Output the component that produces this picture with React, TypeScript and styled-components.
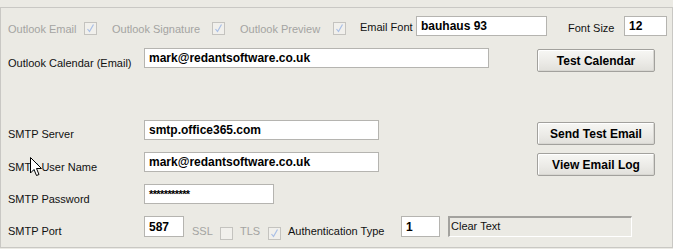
import { FC } from 'react';
import styled, { createGlobalStyle } from 'styled-components';

const GlobalStyle = createGlobalStyle`
  html, body {
    margin: 0;
    padding: 0;
    background: #ebeae4;
  }
  body {
    font-family: 'Liberation Sans', Arial, sans-serif;
    font-size: 11px;
    color: #000;
  }
`;

const Screen = styled.div`
  position: relative;
  width: 673px;
  height: 249px;
  padding-top: 7px;
  box-sizing: border-box;
`;

const Panel = styled.div`
  width: 673px;
  height: 241px;
  box-sizing: border-box;
  border: 1px solid #c9c8c4;
  padding: 8px 0 0 7px;
  display: flex;
  flex-direction: column;
`;

// each row has a fixed height so labels sitting lower don't push the next row down
const Row = styled.div<{ $top?: number; $h: number }>`
  display: flex;
  align-items: flex-start;
  height: ${(p) => p.$h}px;
  flex-shrink: 0;
  margin-top: ${(p) => p.$top ?? 0}px;
`;

const Label = styled.span<{ $w: number; $top?: number; $ml?: number; $disabled?: boolean }>`
  display: block;
  width: ${(p) => p.$w}px;
  margin-left: ${(p) => p.$ml ?? 0}px;
  margin-top: ${(p) => p.$top ?? 9}px;
  line-height: 13px;
  white-space: nowrap;
  color: ${(p) => (p.$disabled ? '#a4a4a2' : '#111')};
`;

const Input = styled.div<{ $w: number; $h?: number }>`
  width: ${(p) => p.$w}px;
  height: ${(p) => p.$h ?? 20}px;
  box-sizing: border-box;
  border: 1px solid #b5b4b0;
  background: #fff;
  padding: 0 4px;
  display: flex;
  align-items: center;
  font-weight: bold;
  font-size: 12px;
  white-space: nowrap;
  overflow: hidden;
  color: #000;
`;

const Password = styled.span`
  font-size: 11px;
  letter-spacing: -0.6px;
  margin-top: -1px;
`;

const ReadOnlyBox = styled.div<{ $w: number; $ml?: number }>`
  width: ${(p) => p.$w}px;
  height: 21px;
  margin-left: ${(p) => p.$ml ?? 0}px;
  box-sizing: border-box;
  border-top: 2px solid #a3a29e;
  border-left: 2px solid #a3a29e;
  border-bottom: 1px solid #fff;
  border-right: 1px solid #fff;
  padding: 2px 0 0 1px;
  line-height: 13px;
  color: #111;
`;

const Button = styled.div<{ $ml: number; $top?: number }>`
  width: 118px;
  height: 23px;
  margin-left: ${(p) => p.$ml}px;
  margin-top: ${(p) => p.$top ?? 0}px;
  box-sizing: border-box;
  border: 1px solid #a2a19d;
  border-radius: 2px;
  box-shadow: inset 1px 1px 0 #fff, inset -1px -1px 0 #d8d7d2;
  background: linear-gradient(#f7f7f4, #ebeae6 60%, #e1e0db);
  display: flex;
  align-items: center;
  justify-content: center;
  font-weight: bold;
  font-size: 12px;
  color: #000;
`;

const CheckBox = styled.span<{ $mr: number; $top?: number }>`
  display: block;
  width: 13px;
  height: 13px;
  box-sizing: border-box;
  margin-top: ${(p) => p.$top ?? 11}px;
  margin-right: ${(p) => p.$mr}px;
  border: 1px solid #c4c3bf;
  background: #f1f0ec;
  svg {
    display: block;
  }
`;

const Cursor = styled.svg`
  position: absolute;
  left: 30px;
  top: 157px;
`;

const Check: FC<{ checked?: boolean; mr: number; top?: number }> = ({ checked, mr, top }) => (
  <CheckBox $mr={mr} $top={top}>
    {checked && (
      <svg width="11" height="11" viewBox="0 0 11 11">
        <path d="M2.5 6 L4.5 8.5 L8.5 1.5" fill="none" stroke="#a9bfe6" strokeWidth="1.2" />
      </svg>
    )}
  </CheckBox>
);

const App: FC = () => {
  return (
    <>
      <GlobalStyle />
      <Screen>
        <Panel>
          <Row $h={20}>
            <Label $w={76} $top={7} $disabled>Outlook Email</Label>
            <Check checked mr={15} top={6} />
            <Label $w={100} $top={7} $disabled>Outlook Signature</Label>
            <Check checked mr={15} top={6} />
            <Label $w={93} $top={7} $disabled>Outlook Preview</Label>
            <Check checked mr={14} top={6} />
            <Label $w={56} $top={5}>Email Font</Label>
            <Input $w={131}>bauhaus 93</Input>
            <Label $w={56} $ml={21} $top={6}>Font Size</Label>
            <Input $w={43}>12</Input>
          </Row>

          <Row $h={24} $top={12}>
            <Label $w={136}>Outlook Calendar (Email)</Label>
            <Input $w={345}>mark@redantsoftware.co.uk</Input>
            <Button $ml={48} $top={1}>Test Calendar</Button>
          </Row>

          <Row $h={24} $top={48}>
            <Label $w={136} $top={8}>SMTP Server</Label>
            <Input $w={235}>smtp.office365.com</Input>
            <Button $ml={158} $top={2}>Send Test Email</Button>
          </Row>

          <Row $h={24} $top={8}>
            <Label $w={136}>SMTP User Name</Label>
            <Input $w={235}>mark@redantsoftware.co.uk</Input>
            <Button $ml={158} $top={1}>View Email Log</Button>
          </Row>

          <Row $h={20} $top={8}>
            <Label $w={136}>SMTP Password</Label>
            <Input $w={130}>
              <Password>***********</Password>
            </Input>
          </Row>

          <Row $h={21} $top={12}>
            <Label $w={136}>SMTP Port</Label>
            <Input $w={40} $h={21}>587</Input>
            <Label $w={28} $ml={8} $disabled>SSL</Label>
            <Check mr={7} />
            <Label $w={28} $disabled>TLS</Label>
            <Check checked mr={7} />
            <Label $w={113}>Authentication Type</Label>
            <Input $w={39} $h={21}>1</Input>
            <ReadOnlyBox $w={184} $ml={8}>Clear Text</ReadOnlyBox>
          </Row>
        </Panel>

        <Cursor width="13" height="20" viewBox="0 0 13 20">
          <path
            d="M0.5 0.5 L0.5 16 L4 12.5 L6.5 18.5 L9 17.5 L6.5 11.5 L11.5 11.5 Z"
            fill="#fff"
            stroke="#000"
            strokeWidth="1"
            strokeLinejoin="miter"
          />
        </Cursor>
      </Screen>
    </>
  );
};

export default App;
